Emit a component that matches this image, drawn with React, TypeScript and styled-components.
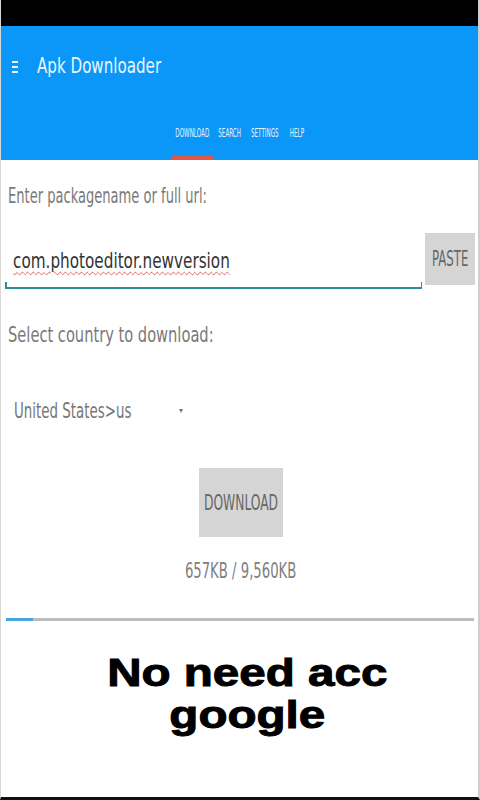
import React from "react";
import styled, { createGlobalStyle } from "styled-components";

const Global = createGlobalStyle`
  html, body { margin: 0; padding: 0; background: #fff; }
  body { width: 480px; height: 800px; overflow: hidden; }
  * { box-sizing: border-box; }
`;

const NARROW = `"Liberation Sans Narrow", "DejaVu Sans Condensed", "Roboto Condensed", Roboto, sans-serif`;

const Screen = styled.div`
  width: 480px;
  height: 800px;
  display: flex;
  flex-direction: column;
  background: #fff;
  border-left: 1px solid #d8d8d8;
  border-right: 2px solid #cfcfcf;
  border-bottom: 3px solid #111;
  font-family: ${NARROW};
  overflow: hidden;
`;

const Squeeze = styled.span<{ $sx: number; $origin?: string }>`
  display: inline-block;
  white-space: nowrap;
  transform: scaleX(${(p) => p.$sx});
  transform-origin: ${(p) => p.$origin ?? "left"} center;
`;

const StatusBar = styled.div`
  height: 26px;
  background: #000;
  flex-shrink: 0;
`;

const AppBar = styled.header`
  height: 134px;
  background: #0a97f8;
  display: flex;
  flex-direction: column;
  flex-shrink: 0;
`;

const Toolbar = styled.div`
  height: 80px;
  display: flex;
  align-items: center;
  padding-left: 11px;
  gap: 19px;
`;

const Burger = styled.div`
  width: 6px;
  display: flex;
  flex-direction: column;
  gap: 3px;
  margin-top: 1px;
  span {
    display: block;
    height: 2px;
    background: #e9f5ff;
  }
`;

const Title = styled.h1`
  margin: 0;
  font-family: ${NARROW};
  font-weight: 400;
  font-size: 21px;
  color: #eaf6ff;
`;

const Tabs = styled.nav`
  flex: 1;
  display: flex;
  justify-content: center;
  align-items: stretch;
  gap: 2px;
  padding-left: 1px;
`;

const Tab = styled.div<{ $active?: boolean; $w: number }>`
  width: ${(p) => p.$w}px;
  display: flex;
  align-items: center;
  justify-content: center;
  font-size: 13px;
  color: #e6f3ff;
  border-bottom: 4px solid ${(p) => (p.$active ? "#e0574a" : "transparent")};
  padding-top: 2px;
`;

const Content = styled.main`
  display: flex;
  flex-direction: column;
  padding: 0 3px 0 4px;
`;

const Label = styled.div<{ $top: number }>`
  margin-top: ${(p) => p.$top}px;
  padding-left: 3px;
  font-size: 22px;
  color: #7a7a7a;
  line-height: 22px;
`;

const InputRow = styled.div`
  margin-top: 26px;
  display: flex;
  align-items: flex-start;
  gap: 3px;
`;

const Field = styled.div`
  flex: 1;
  height: 56px;
  position: relative;
  display: flex;
  align-items: center;
  padding: 0 0 0 8px;
  border-bottom: 2px solid #2c8f96;
  &::before, &::after {
    content: "";
    position: absolute;
    bottom: 0;
    width: 1.5px;
    height: 5px;
    background: #2c8f96;
  }
  &::before { left: 0; }
  &::after { right: 0; }
`;

const FieldText = styled(Squeeze)`
  font-size: 22px;
  color: #333;
  text-decoration: underline wavy #d9534f;
  text-decoration-thickness: 1px;
  text-underline-offset: 3px;
`;

const GrayButton = styled.button<{ $w: number; $h: number; $fs: number }>`
  width: ${(p) => p.$w}px;
  height: ${(p) => p.$h}px;
  border: none;
  background: #d5d5d5;
  color: #666;
  font-family: ${NARROW};
  font-size: ${(p) => p.$fs}px;
  padding: 0;
  flex-shrink: 0;
  display: flex;
  align-items: center;
  justify-content: center;
  overflow: visible;
`;

const SelectRow = styled.div`
  margin-top: 54px;
  display: flex;
  align-items: center;
  padding-left: 9px;
  height: 22px;
  font-size: 21px;
  color: #777;
`;

const SelectText = styled.div`
  width: 165px;
  display: flex;
`;

const Caret = styled.span`
  width: 0;
  height: 0;
  border-left: 2px solid transparent;
  border-right: 2px solid transparent;
  border-top: 4px solid #777;
`;

const Center = styled.div<{ $top: number }>`
  margin-top: ${(p) => p.$top}px;
  display: flex;
  justify-content: center;
  padding-left: 2px;
`;

const SizeText = styled.div`
  font-size: 21px;
  color: #808080;
  line-height: 22px;
`;

const Progress = styled.div`
  margin: 36px 1px 0 1px;
  height: 3px;
  background: #bcbcbc;
`;

const ProgressFill = styled.div`
  height: 100%;
  background: #48a7e0;
`;

const Promo = styled.div`
  margin-top: 31px;
  padding-left: 12px;
  text-align: center;
  font-family: "Liberation Sans", Arial, sans-serif;
  font-weight: 700;
  font-size: 39px;
  line-height: 42px;
  color: #000;
  -webkit-text-stroke: 1px #000;
  transform: scaleX(1.22);
  transform-origin: center;
`;

export default function App() {
  const progress = 657 / 9560;
  return (
    <>
      <Global />
      <Screen>
        <StatusBar />
        <AppBar>
          <Toolbar>
            <Burger>
              <span />
              <span />
              <span />
            </Burger>
            <Title>
              <Squeeze $sx={0.8}>Apk Downloader</Squeeze>
            </Title>
          </Toolbar>
          <Tabs>
            <Tab $active $w={41}>
              <Squeeze $sx={0.48} $origin="center">DOWNLOAD</Squeeze>
            </Tab>
            <Tab $w={30}>
              <Squeeze $sx={0.48} $origin="center">SEARCH</Squeeze>
            </Tab>
            <Tab $w={36}>
              <Squeeze $sx={0.48} $origin="center">SETTINGS</Squeeze>
            </Tab>
            <Tab $w={23}>
              <Squeeze $sx={0.48} $origin="center">HELP</Squeeze>
            </Tab>
          </Tabs>
        </AppBar>
        <Content>
          <Label $top={25}>
            <Squeeze $sx={0.66}>Enter packagename or full url:</Squeeze>
          </Label>
          <InputRow>
            <Field>
              <FieldText $sx={0.77}>com.photoeditor.newversion</FieldText>
            </Field>
            <GrayButton $w={50} $h={52} $fs={21}>
              <Squeeze $sx={0.62} $origin="center">PASTE</Squeeze>
            </GrayButton>
          </InputRow>
          <Label $top={35}>
            <Squeeze $sx={0.74}>Select country to download:</Squeeze>
          </Label>
          <SelectRow>
            <SelectText>
              <Squeeze $sx={0.71}>United States&gt;us</Squeeze>
            </SelectText>
            <Caret />
          </SelectRow>
          <Center $top={46}>
            <GrayButton $w={84} $h={69} $fs={21}>
              <Squeeze $sx={0.65} $origin="center">DOWNLOAD</Squeeze>
            </GrayButton>
          </Center>
          <Center $top={23}>
            <SizeText>
              <Squeeze $sx={0.7} $origin="center">657KB / 9,560KB</Squeeze>
            </SizeText>
          </Center>
          <Progress>
            <ProgressFill style={{ width: `${progress * 85}%` }} />
          </Progress>
          <Promo>
            No need acc
            <br />
            google
          </Promo>
        </Content>
      </Screen>
    </>
  );
}
